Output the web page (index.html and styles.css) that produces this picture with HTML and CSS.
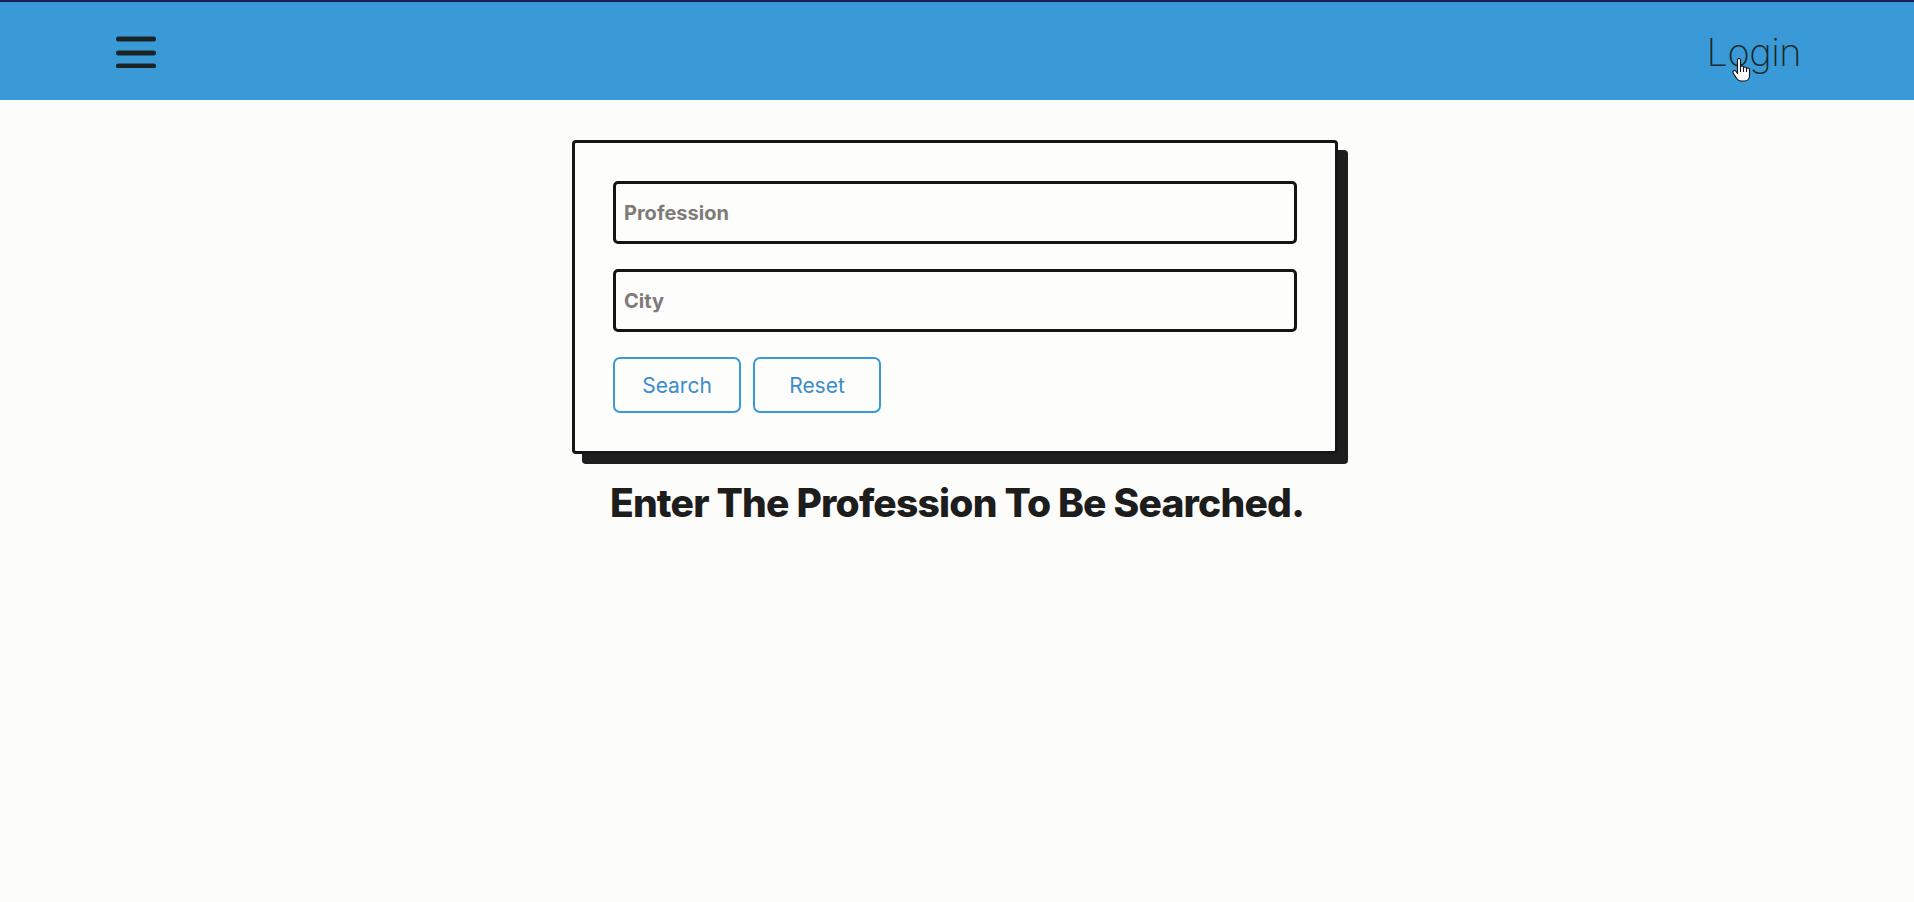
FILE: index.html
```html
<!DOCTYPE html>
<html lang="en">
<head>
<meta charset="utf-8">
<title>Search</title>
<link rel="stylesheet" href="styles.css">
</head>
<body>
<header class="topbar">
  <button class="menu-btn" aria-label="Menu">
    <svg width="40" height="34" viewBox="0 0 40 34">
      <g stroke="#1b2424" stroke-width="5" stroke-linecap="round">
        <line x1="2.5" y1="5" x2="37.5" y2="5"/>
        <line x1="2.5" y1="19" x2="37.5" y2="19"/>
        <line x1="2.5" y1="32" x2="37.5" y2="32"/>
      </g>
    </svg>
  </button>
  <a class="login" href="#">Login<svg class="cursor" width="19" height="25" viewBox="0 0 19 25"><path d="M5.5 2 a1.5 1.5 0 0 1 3 0 V9.5 a1.5 1.5 0 0 1 3 0 V10.5 a1.5 1.5 0 0 1 3 0 V11.5 a1.5 1.5 0 0 1 3 0 V17.5 c0 3-2 5.5-5 5.5 H9 c-2 0-3.2-1-4.3-2.5 L1.2 15 c-.6-.9-.3-1.9.5-2.3 .8-.4 1.7-.1 2.2.6 L5.5 15.5 Z M8.5 10 V14 M11.5 11 V14 M14.5 12 V14" fill="#fff" stroke="#111" stroke-width="1.1" stroke-linejoin="round"/></svg></a>
</header>
<main class="content">
  <form class="search-card">
    <input class="field" type="text" placeholder="Profession">
    <input class="field" type="text" placeholder="City">
    <div class="actions">
      <button type="button" class="btn">Search</button>
      <button type="reset" class="btn">Reset</button>
    </div>
  </form>
  <h1 class="hint">Enter The Profession To Be Searched.</h1>
</main>
</body>
</html>
```

FILE: styles.css
```css
html, body {
  margin: 0;
  padding: 0;
}
body {
  background: #fcfcfa;
  font-family: Inter, "Liberation Sans", sans-serif;
  min-height: 902px;
}
.topbar {
  height: 98px;
  border-top: 2px solid #1d1f5c;
  background: #3a9ad7;
  display: flex;
  align-items: center;
  justify-content: space-between;
  padding: 0 113px 0 116px;
}
.menu-btn {
  border: 0;
  background: transparent;
  padding: 0;
  width: 40px;
  height: 34px;
  display: block;
  cursor: pointer;
}
.menu-btn svg {
  display: block;
}
.login {
  position: relative;
  font-family: Inter, "Open Sans", sans-serif;
  font-weight: 200;
  font-size: 38px;
  color: #1b2a2a;
  text-decoration: none;
  letter-spacing: -0.5px;
  margin-top: 2px;
}
.cursor {
  position: absolute;
  left: 25px;
  top: 29px;
}
.content {
  display: flex;
  flex-direction: column;
  align-items: center;
  padding-top: 40px;
}
.search-card {
  width: 684px;
  padding: 38px 38px 38px;
  border: 3px solid #161616;
  border-radius: 4px;
  background: #fdfdfb;
  box-shadow: 10px 10px 0 0 #1e1e1e;
  display: flex;
  flex-direction: column;
  margin-left: -4px;
}
.field {
  height: 63px;
  box-sizing: border-box;
  border: 3px solid #141414;
  border-radius: 5px;
  background: #fdfdfb;
  padding: 0 8px;
  font-family: Inter, "Liberation Sans", sans-serif;
  font-size: 20px;
  font-weight: 700;
  color: #333;
  outline: none;
  width: 684px;
}
.field::placeholder {
  color: #7d7b78;
}
.field + .field {
  margin-top: 25px;
}
.actions {
  display: flex;
  gap: 12px;
  margin-top: 25px;
}
.btn {
  width: 128px;
  height: 56px;
  border: 2px solid #3a9ad7;
  border-radius: 7px;
  background: #fdfdfb;
  color: #3b8ccc;
  font-family: Inter, "Liberation Sans", sans-serif;
  font-size: 21px;
  font-weight: 400;
  cursor: pointer;
}
.hint {
  margin: 25px 0 0;
  font-family: Inter, "Liberation Sans", sans-serif;
  font-weight: 800;
  font-size: 39px;
  letter-spacing: -0.8px;
  color: #1d1d1d;
}
```
